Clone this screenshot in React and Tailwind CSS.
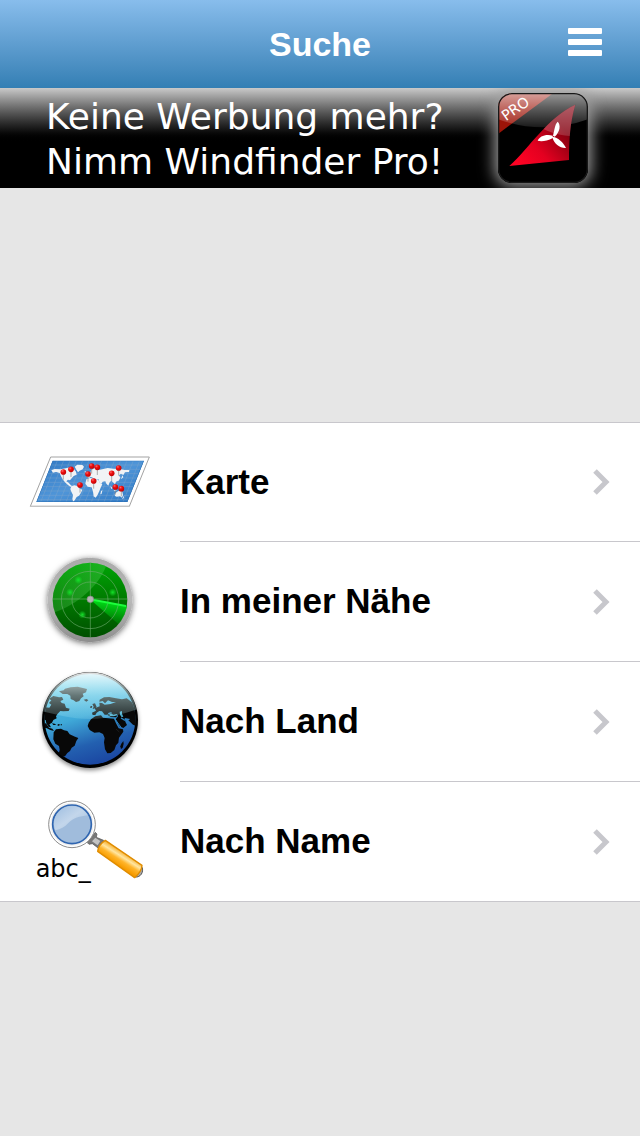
import React from 'react';

const pins = [
  [215, 63], [232, 67], [296, 69], [153, 73], [130, 81], [275, 85],
  [204, 87], [221, 108], [180, 120], [286, 126], [304, 131],
];

const MapIcon = () => (
  <svg viewBox="0 0 420 225" className="w-[140px]" aria-hidden="true">
    <defs>
      <linearGradient id="sea" x1="0" y1="0" x2="1" y2="1">
        <stop offset="0" stopColor="#2f78c4" />
        <stop offset="0.5" stopColor="#4f95d8" />
        <stop offset="1" stopColor="#2d78c4" />
      </linearGradient>
      <radialGradient id="pin" cx="0.35" cy="0.3" r="0.7">
        <stop offset="0" stopColor="#ff6a6a" />
        <stop offset="0.4" stopColor="#ee1111" />
        <stop offset="1" stopColor="#c40000" />
      </radialGradient>
      <clipPath id="sheet">
        <path d="M98 47H372L322 171H49Z" />
      </clipPath>
    </defs>
    <path d="M92 36H388L328 184H31Z" fill="#fff" stroke="#a3a3a3" strokeWidth="3" />
    <path d="M31 184H328" stroke="#c4c4c4" strokeWidth="4" />
    <path d="M98 47H372L322 171H49Z" fill="url(#sea)" />
    <g clipPath="url(#sheet)">
      <g stroke="#86a9cb" strokeWidth="1.5" opacity="0.75">
        {[60, 73, 86, 99, 112, 125, 138, 151, 164].map((y) => (
          <path key={y} d={`M40 ${y}H380`} />
        ))}
        {[112, 131, 150, 169, 188, 207, 226, 245, 264, 283, 302, 321, 340, 359].map((x) => (
          <path key={x} d={`M${x} 47L${x - 50} 171`} />
        ))}
      </g>
      <g fill="#f1f3f5">
        <path d="M94 76L104 72L121 73L141 69L151 67L162 73L168 80L170 89L161 93L155 100L150 106L144 104L139 109L146 113L152 120L157 124L151 125L143 119L135 112L129 104L123 94L119 84L108 81L99 83Z" />
        <path d="M164 65L172 59L187 60L192 65L188 73L179 77L174 82L169 74Z" />
        <path d="M154 124L163 121L172 123L180 131L187 134L183 143L177 152L170 156L164 166L160 170L157 162L159 150L154 140L151 132Z" />
        <path d="M199 94L203 86L211 83L214 75L224 69L237 75L250 72L263 69L280 71L300 72L313 75L328 75L327 81L315 82L310 90L303 86L297 91L301 98L296 107L288 110L285 118L279 112L274 107L269 112L265 122L259 116L256 109L248 110L243 118L238 112L236 103L229 103L220 99L212 95L207 99Z" />
        <path d="M199 103L210 99L222 101L235 104L240 114L247 118L242 128L239 136L233 149L227 158L221 154L219 140L215 127L203 125L196 116Z" />
        <path d="M284 147L291 140L300 136L307 140L309 150L306 158L300 154L290 155L285 153Z" />
        <path d="M243 139L247 135L245 146L241 148ZM310 155L313 151L311 160L306 163ZM271 124L278 129L274 132ZM281 134L290 134L288 138L282 137ZM193 80L198 79L197 84ZM307 91L310 97L303 103Z" />
      </g>
      <path d="M98 47H372L322 171H49Z" fill="none" stroke="#266bb0" strokeWidth="3" />
    </g>
    {pins.map(([x, y]) => (
      <g key={`${x}-${y}`}>
        <path d={`M${x} ${y + 7}V${y + 23}`} stroke="#8a8a8a" strokeWidth="2" />
        <circle cx={x} cy={y} r="8.5" fill="url(#pin)" />
      </g>
    ))}
  </svg>
);

const RadarIcon = () => (
  <svg viewBox="0 6 330 330" className="w-[110px]" aria-hidden="true">
    <defs>
      <linearGradient id="rim" x1="0" y1="0" x2="0" y2="1">
        <stop offset="0" stopColor="#a9a9a9" />
        <stop offset="0.5" stopColor="#b9b9b9" />
        <stop offset="1" stopColor="#8d8d8d" />
      </linearGradient>
      <linearGradient id="dish" x1="0" y1="0" x2="0" y2="1">
        <stop offset="0" stopColor="#00a506" />
        <stop offset="0.5" stopColor="#007a00" />
        <stop offset="1" stopColor="#004f00" />
      </linearGradient>
      <linearGradient id="gloss" x1="0" y1="0.2" x2="0.9" y2="0.9">
        <stop offset="0" stopColor="#5fe063" stopOpacity="0.1" />
        <stop offset="1" stopColor="#7be07e" stopOpacity="0.35" />
      </linearGradient>
      <linearGradient id="sweep" x1="0.6" y1="0" x2="0.4" y2="1">
        <stop offset="0" stopColor="#00f01c" />
        <stop offset="1" stopColor="#00a80c" stopOpacity="0.2" />
      </linearGradient>
      <radialGradient id="blip">
        <stop offset="0" stopColor="#15e02a" />
        <stop offset="1" stopColor="#15e02a" stopOpacity="0" />
      </radialGradient>
      <filter id="radarShadow" x="-20%" y="-20%" width="140%" height="140%">
        <feDropShadow dx="0" dy="4" stdDeviation="9" floodColor="#000" floodOpacity="0.6" />
      </filter>
    </defs>
    <circle cx="165" cy="165" r="127" fill="url(#rim)" filter="url(#radarShadow)" />
    <circle cx="165" cy="165" r="112" fill="url(#dish)" />
    <path d="M59 202A112 112 0 0 1 213 64C190 125 125 180 59 202Z" fill="url(#gloss)" />
    <path d="M165 163L276 184A112 112 0 0 1 251 238Z" fill="url(#sweep)" />
    <g fill="none" stroke="#6fae6f" strokeOpacity="0.6" strokeWidth="3">
      <circle cx="165" cy="165" r="54" />
      <circle cx="165" cy="165" r="86" />
      <path d="M53 162H277M166 53V277" />
    </g>
    <path d="M165 160L273 180V186L165 166Z" fill="#1cff3c" />
    {[[130, 105], [105, 142], [142, 209], [233, 142]].map(([x, y]) => (
      <circle key={x} cx={x} cy={y} r="12" fill="url(#blip)" />
    ))}
    <circle cx="166" cy="163" r="10" fill="#b4b4b4" stroke="#7d857d" strokeWidth="2" />
  </svg>
);

const GlobeIcon = () => (
  <svg viewBox="0 6 360 360" className="w-[120px]" aria-hidden="true">
    <defs>
      <linearGradient id="ocean" x1="0.35" y1="0" x2="0.65" y2="1">
        <stop offset="0" stopColor="#5cc4e4" />
        <stop offset="0.45" stopColor="#3fa9d8" />
        <stop offset="0.75" stopColor="#2360b0" />
        <stop offset="1" stopColor="#1a44a0" />
      </linearGradient>
      <linearGradient id="shine" x1="0" y1="0" x2="0" y2="1">
        <stop offset="0" stopColor="#fff" stopOpacity="0.9" />
        <stop offset="0.5" stopColor="#d8ffff" stopOpacity="0.45" />
        <stop offset="1" stopColor="#c8ffff" stopOpacity="0.14" />
      </linearGradient>
      <clipPath id="globeClip">
        <circle cx="180" cy="180" r="137" />
      </clipPath>
      <clipPath id="shineClip">
        <circle cx="180" cy="180" r="143" />
      </clipPath>
      <filter id="globeShadow" x="-20%" y="-20%" width="140%" height="140%">
        <feDropShadow dx="0" dy="7" stdDeviation="7" floodColor="#000" floodOpacity="0.45" />
      </filter>
    </defs>
    <circle cx="180" cy="180" r="144" fill="#050505" filter="url(#globeShadow)" />
    <circle cx="180" cy="178" r="136" fill="url(#ocean)" />
    <g clipPath="url(#globeClip)">
      <g fill="#080808">
        <path d="M87 94L101 91L105 86L122 82L143 80L171 87L168 97L158 101L161 109L153 115L148 123L138 126L131 121L122 117L121 107L112 102L98 102Z" />
        <path d="M35 150L45 142L58 143L64 134L57 129L64 121L57 116L70 108L81 110L87 112L96 111L100 119L91 123L95 129L104 131L108 143L119 146L116 153L100 154L91 153L83 161L78 169L80 175L70 180L66 188L58 193L63 202L56 201L49 190L47 180L37 178Z" />
        <path d="M35 191L48 190L57 203L67 206L72 213L61 210L49 204L37 205Z" />
        <path d="M66 190L74 191L79 195L70 195ZM83 193L89 192L88 197L83 197ZM92 193H96V196H92Z" />
        <path d="M71 217L78 208L93 206L102 211L112 213L119 223L135 230L145 234L139 243L134 257L125 263L120 273L112 279L105 289L91 288L86 282L89 269L87 258L76 251L70 238Z" />
        <path d="M161 119L170 117L175 121L169 125Z" />
        <path d="M187 132L195 130L200 141L197 144L188 147L191 140ZM182 138L187 138L185 144L180 143Z" />
        <path d="M186 158L198 152L194 145L209 139L208 128L216 129L224 134L242 132L258 126L246 126L234 121L225 130L218 123L208 125L209 119L222 112L238 111L258 115L276 118L290 115L304 125L320 145V199L309 194L295 181L301 177L284 174L286 185L291 195L280 204L268 199L257 178L264 169L262 163L250 161L243 157L236 158L232 164L224 164L216 154L208 153L200 158L196 165L188 165Z" />
        <path d="M232 164L246 159L263 163L259 172L242 171Z" />
        <path d="M183 178L196 169L213 166L219 173L235 175L252 176L258 190L266 205L279 208L280 215L267 233L265 248L258 256L253 270L242 279L232 280L225 268L222 247L224 234L219 222L208 217L193 218L179 210L173 198L176 188Z" />
        <path d="M274 251L280 243L281 251L278 263L273 267L271 259Z" />
      </g>
      <path d="M237 164L243 160L250 164L260 162L262 166L252 169L240 168ZM269 155L276 153L276 161L280 170L275 172L270 164Z" fill="#48a9ca" />
      <path d="M255 177L273 202" stroke="#2c86c2" strokeWidth="3" />
      <path d="M273 174L285 181" stroke="#2c86c2" strokeWidth="4" />
      <path d="M258 207L268 216" stroke="#1c1c1c" strokeWidth="3" />
    </g>
    <path d="M36 36H324V147C280 160 240 177 180 177C120 177 80 163 36 154Z" fill="url(#shine)" clipPath="url(#shineClip)" />
  </svg>
);

const SearchNameIcon = () => (
  <svg viewBox="0 -24 390 360" className="w-[130px]" aria-hidden="true">
    <defs>
      <linearGradient id="grip" gradientUnits="userSpaceOnUse" x1="296" y1="182" x2="272" y2="220">
        <stop offset="0" stopColor="#f4a00c" />
        <stop offset="0.4" stopColor="#ffe6a2" />
        <stop offset="0.65" stopColor="#ffb52b" />
        <stop offset="1" stopColor="#f79c00" />
      </linearGradient>
      <linearGradient id="lens" x1="0" y1="0" x2="1" y2="1">
        <stop offset="0" stopColor="#9dbde0" />
        <stop offset="0.5" stopColor="#c3d6eb" />
        <stop offset="1" stopColor="#a3bfde" />
      </linearGradient>
    </defs>
    <path d="M187 158L211 127L216 132L214 142L236 151L222 176L202 161L192 163Z" fill="#777" stroke="#555" strokeWidth="2" />
    <path d="M201 154L211 143L226 153L218 166Z" fill="#c3c3c3" />
    <path d="M336 261C352 258 357 239 349 228L325 260Z" fill="#aaa" stroke="#555" strokeWidth="3" />
    <path d="M241 151L351 226Q350 246 329 263L218 184Q220 164 241 151Z" fill="url(#grip)" stroke="#e08c00" strokeWidth="4" strokeLinejoin="round" />
    <circle cx="141" cy="103" r="70" fill="#fff" stroke="#8c8c8c" strokeWidth="3" />
    <circle cx="141" cy="103" r="62" fill="none" stroke="#eeeeee" strokeWidth="5" />
    <circle cx="141" cy="103" r="58" fill="#a0bcdc" stroke="#2f65b0" strokeWidth="5" />
    <path d="M87 107A54 54 0 0 1 188 76C164 79 145 84 130 99C119 111 107 118 91 121Z" fill="url(#lens)" />
    <text x="32" y="261" fontSize="72" fill="#000" className="font-['DejaVu_Sans',sans-serif]">abc_</text>
  </svg>
);

const AppIcon = () => (
  <svg viewBox="54 279 270 270" className="size-[90px] shrink-0 rounded-[14px] shadow-[0_0_16px_3px_#a3a3a3]" aria-hidden="true">
    <defs>
      <linearGradient id="glass" x1="0" y1="0" x2="0" y2="1">
        <stop offset="0" stopColor="#fff" stopOpacity="0.6" />
        <stop offset="0.4" stopColor="#fff" stopOpacity="0.38" />
        <stop offset="1" stopColor="#fff" stopOpacity="0.1" />
      </linearGradient>
      <linearGradient id="sail" x1="0" y1="1" x2="1" y2="0.2">
        <stop offset="0.1" stopColor="#ff0324" />
        <stop offset="0.4" stopColor="#e40020" />
        <stop offset="0.8" stopColor="#84000f" />
      </linearGradient>
      <linearGradient id="sailTop" x1="0" y1="0" x2="0" y2="1">
        <stop offset="0" stopColor="#fff" stopOpacity="0.4" />
        <stop offset="1" stopColor="#fff" stopOpacity="0.16" />
      </linearGradient>
      <clipPath id="tile">
        <rect x="54" y="279" width="270" height="270" rx="40" />
      </clipPath>
      <clipPath id="sailClip">
        <path d="M88 498C149 443 204 351 286 314C270 365 267 424 267 480Z" />
      </clipPath>
    </defs>
    <g clipPath="url(#tile)">
      <rect x="54" y="279" width="270" height="270" fill="#000" />
      <path d="M54 279H220L54 402Z" fill="#9c1408" />
      <path d="M54 279H324V358Q190 406 54 358Z" fill="url(#glass)" />
      <path d="M88 498C149 443 204 351 286 314C270 365 267 424 267 480Z" fill="url(#sail)" />
      <g clipPath="url(#sailClip)">
        <path d="M180 300H300V408C250 411 215 400 180 382Z" fill="url(#sailTop)" />
      </g>
    </g>
    <text x="78" y="364" fontSize="43" fill="#fff" transform="rotate(-35 78 364)" className="font-['DejaVu_Sans',sans-serif]">PRO</text>
    <g fill="#fff">
      <path d="M219 407C224 389 224 374 233 365C243 374 240 396 224 410Z" />
      <path d="M219 414C200 424 182 425 173 422C178 409 197 401 218 407Z" />
      <path d="M218 411C229 409 250 426 258 444C239 445 222 430 218 414Z" />
    </g>
    <rect x="56" y="281" width="266" height="266" rx="39" fill="none" stroke="#181818" strokeWidth="4" />
  </svg>
);

const Chevron = () => (
  <svg viewBox="0 0 18 26" className="h-[26px] w-[18px]" aria-hidden="true">
    <path d="M3 2L14 13L3 24" fill="none" stroke="#c7c7cc" strokeWidth="5" />
  </svg>
);

const menuItems = [
  { label: 'Karte', href: '#karte', Icon: MapIcon },
  { label: 'In meiner Nähe', href: '#naehe', Icon: RadarIcon },
  { label: 'Nach Land', href: '#land', Icon: GlobeIcon },
  { label: 'Nach Name', href: '#name', Icon: SearchNameIcon },
];

const App = () => {
  return (
    <div className="flex min-h-screen flex-col bg-[#e6e6e6] font-['Liberation_Sans',Arial,sans-serif]">
      {/* Title bar */}
      <header className="grid h-[88px] grid-cols-[1fr_auto_1fr] items-center bg-linear-to-b from-[#88bdec] to-[#337fb4] px-9">
        <h1 className="col-start-2 text-[34px] font-bold text-white">Suche</h1>
        <button type="button" aria-label="Menü" className="justify-self-end">
          <svg viewBox="0 0 36 34" className="h-[34px] w-9 fill-white">
            <rect x="0" y="1" width="34" height="6" rx="1" />
            <rect x="0" y="12" width="34" height="6" rx="1" />
            <rect x="0" y="23" width="34" height="6" rx="1" />
          </svg>
        </button>
      </header>

      {/* Ad banner */}
      <a
        href="#pro"
        className="flex h-[100px] items-center justify-between overflow-hidden bg-linear-to-b from-[#cacaca] to-black to-54% pr-[52px] pl-[46px] font-['DejaVu_Sans',sans-serif] text-4xl leading-[45px] text-white"
      >
        <span className="pt-0.5">
          Keine Werbung mehr?
          <br />
          Nimm Windfinder Pro!
        </span>
        <AppIcon />
      </a>

      {/* Search options */}
      <main className="flex flex-1 flex-col justify-center">
        <ul className="bg-white">
          {menuItems.map(({ label, href, Icon }) => (
            <li key={label} className="group">
              <a
                href={href}
                className="flex h-[120px] items-stretch border-[#c8c7cc] group-first:border-t group-last:border-b"
              >
                <span className="flex w-[180px] shrink-0 items-center justify-center">
                  <Icon />
                </span>
                <span className="flex flex-1 items-center justify-between border-b border-[#c8c7cc] pr-[30px] group-last:border-b-0">
                  <span className="text-[35px] font-bold text-black">{label}</span>
                  <Chevron />
                </span>
              </a>
            </li>
          ))}
        </ul>
      </main>
    </div>
  );
};

export default App;
